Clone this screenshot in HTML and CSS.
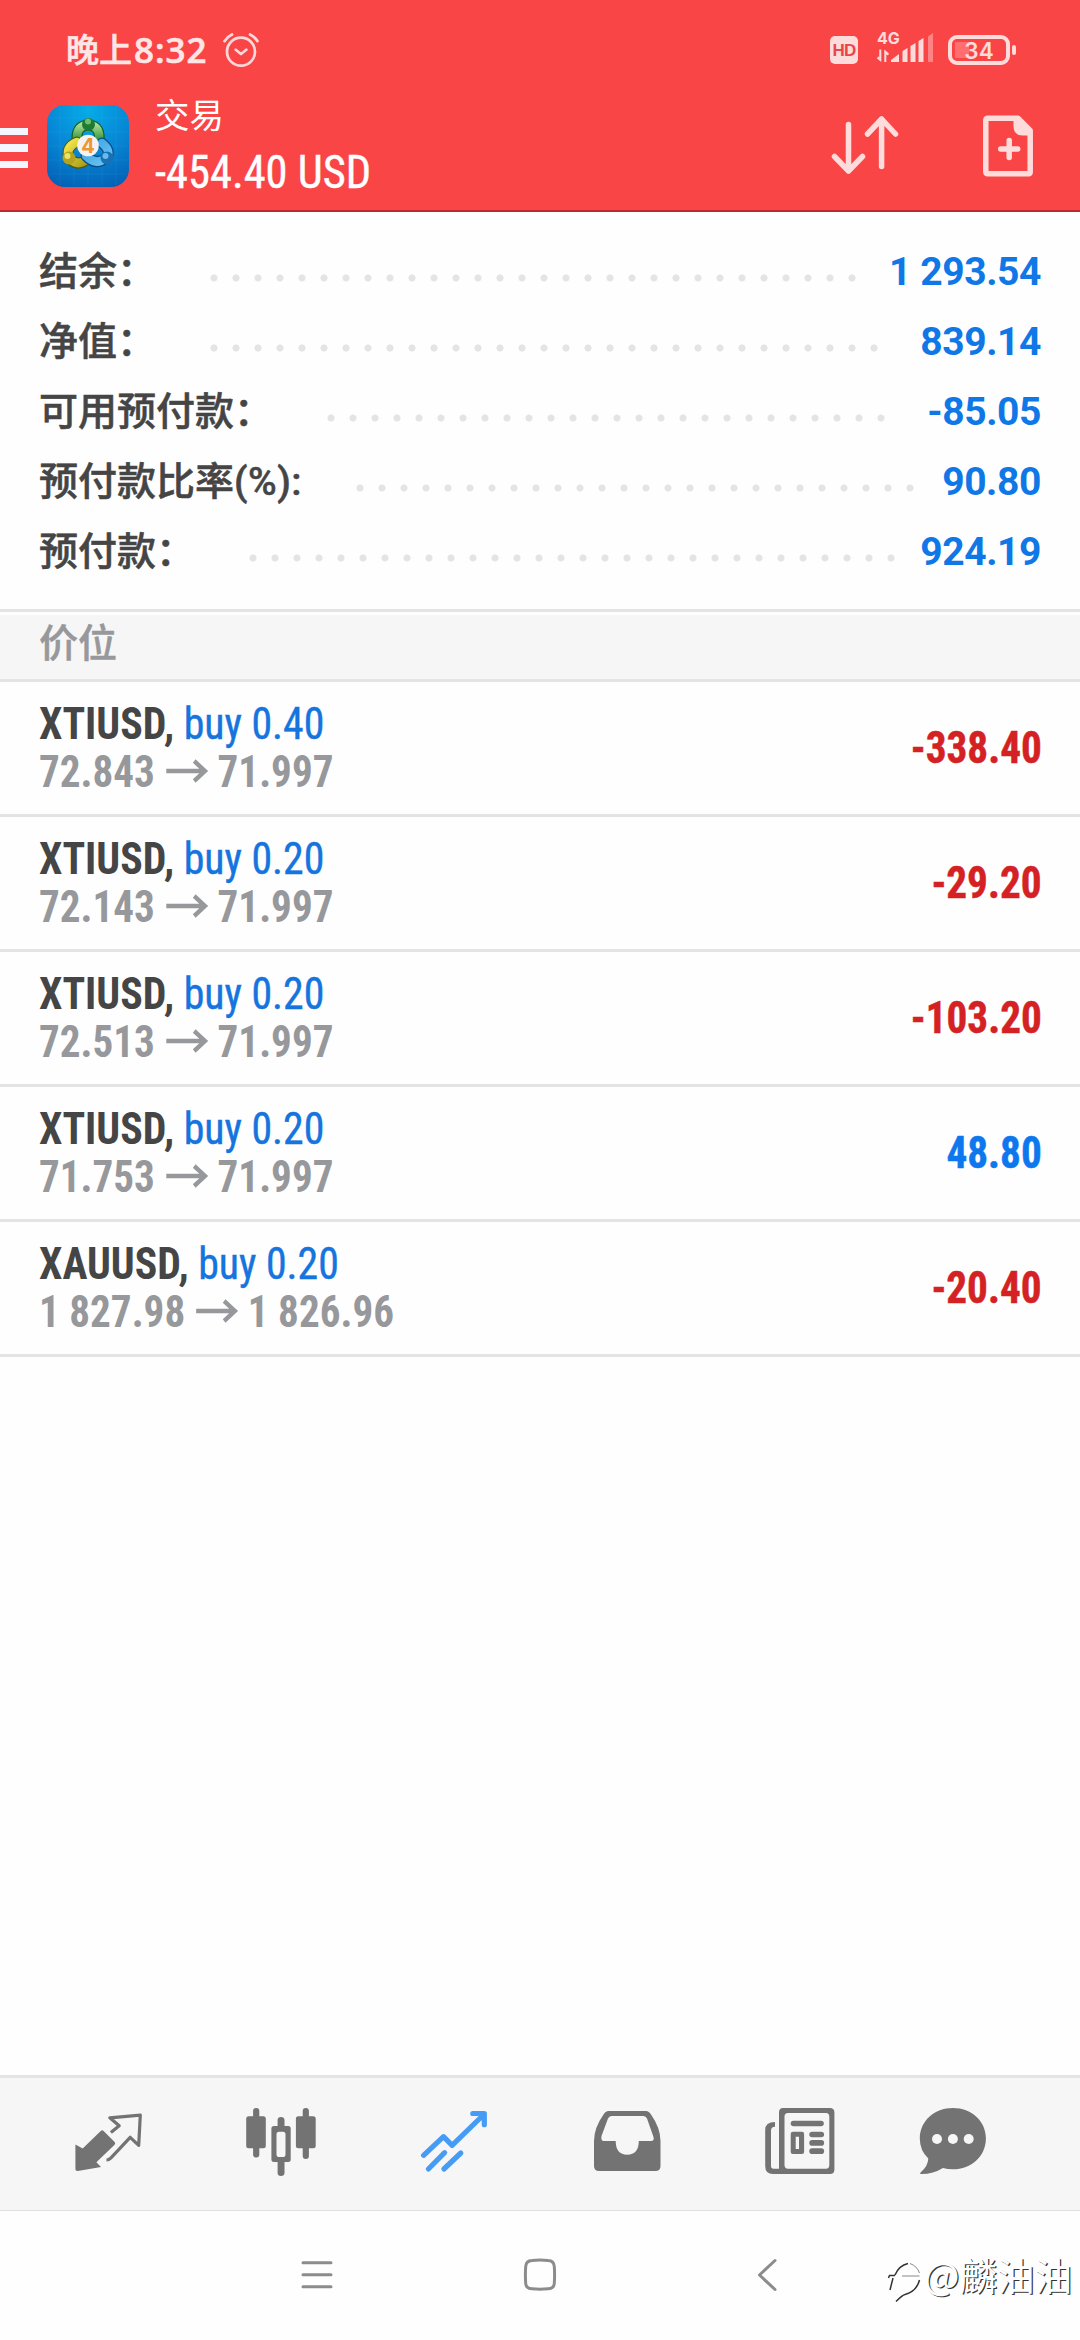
FILE: index.html
```html
<!DOCTYPE html>
<html lang="zh-CN">
<head>
<meta charset="utf-8">
<title>交易</title>
<link rel="stylesheet" href="styles.css">
</head>
<body>
<div class="screen">
  <header class="header">
    <div class="status">
      <span class="clock">晚上<span class="clock-digits">8:32</span></span>
      <svg class="alarm" width="38" height="38" viewBox="0 0 38 38">
        <circle cx="19" cy="20.700" r="14" />
        <path d="M13.700 18.700 19 23 24.300 18.700M2.500 10.200Q5.500 5.500 10 3.500M35.500 10.200Q32.500 5.500 28 3.500" />
      </svg>
      <span class="status-gap"></span>
      <span class="hd">HD</span>
      <div class="network">
        <svg width="50" height="36" viewBox="0 0 50 36">
          <text x="0" y="15" class="net-label">4G</text>
          <path d="M4.300 20.500V33L0 29.500 1 27.500 2.300 28V20.500ZM7.300 33V20.500L12 24.500 11 26.500 9.300 25.500V33Z" />
          <path d="M14 33v-2q4-3 8-6v8ZM25.500 33V22l5-3v14ZM33.500 33V17l5-3v19ZM41.500 33V12l5-3v24Z" />
        </svg>
        <svg width="6" height="36" viewBox="0 0 6 36" class="weak"><path d="M0 33V7.500L5 4v29Z" /></svg>
      </div>
      <div class="battery"><span class="battery-body">34</span><span class="battery-tip"></span></div>
    </div>
    <div class="toolbar">
      <div class="menu"><i></i><i></i><i></i></div>
      <svg class="logo" width="82" height="82" viewBox="0 0 82 82">
        <defs>
          <radialGradient id="sky" cx=".5" cy=".05" r="1"><stop offset="0" stop-color="#05ace8"/><stop offset=".55" stop-color="#0785d4"/><stop offset="1" stop-color="#0361b5"/></radialGradient>
          <linearGradient id="green" x2="0" y2="1"><stop stop-color="#a6dc8c"/><stop offset="1" stop-color="#238a35"/></linearGradient>
          <linearGradient id="gold" x2="1" y2="1"><stop stop-color="#f2e64a"/><stop offset="1" stop-color="#a99a18"/></linearGradient>
          <linearGradient id="blue" x2="1" y2="1"><stop stop-color="#3aa2e0"/><stop offset="1" stop-color="#69c3f4"/></linearGradient>
        </defs>
        <rect width="82" height="82" rx="18" fill="url(#sky)"/>
        <path d="M13 2v78M27 1v80M41 1v80M55 1v80M69 2v78M2 13h78M1 27h80M1 41h80M1 55h80M2 69h78" stroke="#69c9fa" stroke-opacity=".1"/>
        <g fill="none" stroke-linecap="round">
          <path d="M30 35Q29 20 42 20Q54 21 52 37" stroke="#14612d" stroke-width="11"/>
          <path d="M30 35Q29 20 42 20Q54 21 52 37" stroke="url(#green)" stroke-width="8.500"/>
          <path d="M22 54Q18 42 30 37M23 54Q31 62 41 54" stroke="#4d5a12" stroke-width="11"/>
          <path d="M22 54Q18 42 30 37M23 54Q31 62 41 54" stroke="url(#gold)" stroke-width="8.500"/>
          <path d="M55 38Q65 46 59 53Q49 61 39 51" stroke="#0a4c87" stroke-width="11"/>
          <path d="M55 38Q65 46 59 53Q49 61 39 51" stroke="url(#blue)" stroke-width="8.500"/>
        </g>
        <circle cx="41.500" cy="19.500" r="6.500" fill="#1e7b34"/><circle cx="41" cy="16.500" r="3" fill="#72bd69"/>
        <circle cx="22" cy="53" r="6.500" fill="#b3a31f"/><circle cx="20.500" cy="51" r="3" fill="#ece267"/>
        <circle cx="60" cy="53" r="6.500" fill="#1971b5"/><circle cx="58.500" cy="51" r="3" fill="#6db9ea"/>
        <circle cx="41" cy="40.500" r="10.800" fill="#f4f3f0"/>
        <text x="41" y="47.500" class="logo-digit">4</text>
      </svg>
      <div class="title">
        <span class="title-name">交易</span>
        <span class="title-sum">-454.40 USD</span>
      </div>
      <svg class="sort" width="72" height="72" viewBox="0 0 72 72">
        <path d="M20.500 14.500V61M6.500 46.500 20.500 61 34.500 46.500M53.600 56.500V9M39.500 24 53.600 9 67.500 24" />
      </svg>
      <svg class="order" width="56" height="66" viewBox="0 0 56 66">
        <path class="page" d="M8 5.300H38L50.200 17.500V59Q50.200 60.700 48.500 60.700H8Q5.800 60.700 5.800 58.500V7.500Q5.800 5.300 8 5.300Z" />
        <path class="fold" d="M33.500 5V14Q34 22 42.500 22.500H50L50 16 39 5Z" />
        <path class="page plus" d="M29.200 27.500V44.500M20.700 36H37.700" />
      </svg>
    </div>
  </header>

  <main class="content">
    <section class="summary">
      <div class="sum-row"><span class="label">结余：</span><span class="dots" style="--dots:30"></span><span class="value">1 293.54</span></div>
      <div class="sum-row"><span class="label">净值：</span><span class="dots" style="--dots:31"></span><span class="value">839.14</span></div>
      <div class="sum-row"><span class="label">可用预付款：</span><span class="dots" style="--dots:26"></span><span class="value">-85.05</span></div>
      <div class="sum-row"><span class="label">预付款比率<span class="percent">(%):</span></span><span class="dots" style="--dots:26"></span><span class="value">90.80</span></div>
      <div class="sum-row"><span class="label">预付款：</span><span class="dots" style="--dots:30"></span><span class="value">924.19</span></div>
    </section>
    <h2 class="section">价位</h2>
    <ul class="positions">
      <li class="position">
        <div class="info">
          <div class="line"><b>XTIUSD,</b><span class="side">buy 0.40</span></div>
          <div class="line prices">72.843<svg class="arrow" width="45" height="24" viewBox="0 0 45 24"><path d="M0 12H42M30 2 41.500 12 30 22"/></svg>71.997</div>
        </div>
        <span class="profit loss">-338.40</span>
      </li>
      <li class="position">
        <div class="info">
          <div class="line"><b>XTIUSD,</b><span class="side">buy 0.20</span></div>
          <div class="line prices">72.143<svg class="arrow" width="45" height="24" viewBox="0 0 45 24"><path d="M0 12H42M30 2 41.500 12 30 22"/></svg>71.997</div>
        </div>
        <span class="profit loss">-29.20</span>
      </li>
      <li class="position">
        <div class="info">
          <div class="line"><b>XTIUSD,</b><span class="side">buy 0.20</span></div>
          <div class="line prices">72.513<svg class="arrow" width="45" height="24" viewBox="0 0 45 24"><path d="M0 12H42M30 2 41.500 12 30 22"/></svg>71.997</div>
        </div>
        <span class="profit loss">-103.20</span>
      </li>
      <li class="position">
        <div class="info">
          <div class="line"><b>XTIUSD,</b><span class="side">buy 0.20</span></div>
          <div class="line prices">71.753<svg class="arrow" width="45" height="24" viewBox="0 0 45 24"><path d="M0 12H42M30 2 41.500 12 30 22"/></svg>71.997</div>
        </div>
        <span class="profit">48.80</span>
      </li>
      <li class="position">
        <div class="info">
          <div class="line"><b>XAUUSD,</b><span class="side">buy 0.20</span></div>
          <div class="line prices">1 827.98<svg class="arrow" width="45" height="24" viewBox="0 0 45 24"><path d="M0 12H42M30 2 41.500 12 30 22"/></svg>1 826.96</div>
        </div>
        <span class="profit loss">-20.40</span>
      </li>
    </ul>
  </main>

  <nav class="tabs">
    <svg viewBox="0 0 96 96">
      <path class="fill" d="M15.400 49.500 22.700 53.500 41 35.800Q42.300 34.700 43.600 36L54.600 47Q55.800 48.300 54.600 49.800L36.400 67.300 41 72 17.800 76Q15.400 76.200 15.400 74Z" />
      <path class="thin" d="M50.900 37.500 59.200 30.700 49.800 22.800 80.300 20.200 78.700 50.300 70.200 42.300 50.500 63.300Q49 65 46.500 65" />
    </svg>
    <svg viewBox="0 0 96 96">
      <g class="fill">
        <rect x="13.200" y="21.300" width="19.600" height="32" rx="2.500"/><rect x="20.100" y="13" width="6.200" height="49.500" rx="3"/>
        <path fill-rule="evenodd" d="M41 31H55.200Q57.700 31 57.700 33.500V64.500Q57.700 67 55.200 67H41Q38.400 67 38.400 64.500V33.500Q38.400 31 41 31ZM46 36.700Q43.500 36.700 43.500 39.500V59.200Q43.500 62 46 62H50Q52.500 62 52.500 59.200V39.500Q52.500 36.700 50 36.700Z"/>
        <path d="M44.600 32V25Q44.600 22 48 22T51.500 25V32ZM44.600 66V78Q44.600 81 48 81T51.500 78V66Z"/>
        <rect x="62.900" y="21.300" width="19.800" height="32" rx="2.500"/><rect x="69.700" y="13" width="6.200" height="51" rx="3"/>
      </g>
    </svg>
    <svg viewBox="0 0 96 96">
      <path class="active" d="M17.600 60.300 37.500 41.700 46.100 50.300 77.800 19.500M66.800 18.500H78.300V29.700M22.400 74 38.600 57.700M37.900 74 54.800 58" />
    </svg>
    <svg viewBox="0 0 96 96">
      <path class="fill" fill-rule="evenodd" d="M29.500 16H67Q70 16 72 19.500 81.500 33 81.500 46V71Q81.500 76 76.500 76H20Q15 76 15 71V46Q15 33 24.500 19.500 26.500 16 29.500 16ZM32.500 21Q30 21 29 23.500L22.500 41Q21.500 46 25 46H36.700Q36.700 59.700 48.200 59.700T59.800 46H72Q75.500 46 74.500 42L68 23.500Q67 21 64.500 21Z" />
    </svg>
    <svg viewBox="0 0 96 96">
      <g class="fill">
        <path fill-rule="evenodd" d="M31 13H78Q82.400 13 82.400 17.500V74.500Q82.400 79 78 79H21Q13.200 79 13.200 71V35Q13.200 27 23 27V31.800Q19 31.800 19 36V71Q19 73.700 21.500 73.700H27V17.500Q27 13 31 13ZM36 18Q32.500 18 32.500 21.500V70Q32.500 73.700 36 73.700H74Q77.300 73.700 77.300 70V21.500Q77.300 18 74 18Z"/>
        <rect x="38.700" y="25.700" width="33.100" height="5.600" rx="2.800"/>
        <path fill-rule="evenodd" d="M41 36.700H50Q52.100 36.700 52.100 39V57Q52.100 59 50 59H41Q38.700 59 38.700 57V39Q38.700 36.700 41 36.700ZM43.700 41.700V54H47V41.700Z"/>
        <rect x="57.300" y="36.700" width="14.800" height="5.600" rx="2.800"/><rect x="57.300" y="45" width="14.800" height="5.700" rx="2.800"/><rect x="57.300" y="53.300" width="14.800" height="5.700" rx="2.800"/>
      </g>
    </svg>
    <svg viewBox="0 0 96 96">
      <path class="fill" d="M47.900 13C66.500 13 80.900 26 80.900 43.500S66.500 74.300 47.900 74.300Q42.500 74.300 37.900 73 28.500 79 16.500 79 14 79 16 77 23 71 23.300 63.500 14.800 55.500 14.800 43.500C14.800 26 29.300 13 47.900 13Z" />
      <g class="holes"><circle cx="32" cy="44" r="5"/><circle cx="47.900" cy="44" r="5"/><circle cx="63.700" cy="44" r="5"/></g>
    </svg>
  </nav>

  <footer class="system">
    <svg width="36" height="36" viewBox="0 0 36 36"><path d="M4 5.700H32M4 17.700H32M4 29.700H32"/></svg>
    <svg width="36" height="36" viewBox="0 0 36 36"><path d="M10 3.500Q18 2.500 26 3.500 32 3.800 32.300 9.500 32.900 18 32.300 26.500 32 31.500 26 31.800 18 32.700 10 31.800 4 31.500 3.700 26.500 3.100 18 3.700 9.500 4 3.800 10 3.500Z"/></svg>
    <svg width="36" height="36" viewBox="0 0 36 36"><path d="M26 3.500 10.500 18 26 32.500"/></svg>
    <div class="watermark">
      <svg width="40" height="54" viewBox="0 0 40 54">
        <path class="ink" d="M11 23Q15 13.500 24 11.500M4.500 26 5.500 23.500H11M9 26 6 38M35.500 28Q33 39 21 42.500 18.500 43 12 49.500"/>
        <path class="shine" d="M26 11.500Q33 14 35.500 21M18 24H35.500"/>
      </svg>
      <span>@麟油油</span>
    </div>
  </footer>
</div>
</body>
</html>
```
FILE: styles.css
```css
* { box-sizing: border-box; }

body {
  margin: 0;
  background: #fff;
  font-family: Roboto, "Noto Sans CJK SC", sans-serif;
}

.screen {
  display: flex;
  flex-direction: column;
  width: 1080px;
  height: 2340px;
  overflow: hidden;
  background: #fefefe;
}

svg { display: block; flex: none; }

/* Header */
.header {
  height: 212px;
  background: #fa4547;
  border-bottom: 2px solid #bb2a2e;
  color: #ffdcdc;
}

.status {
  display: flex;
  align-items: center;
  height: 90px;
  padding: 9px 64px 0 66px;
}

.clock {
  display: flex;
  width: 156px;
  font: 500 33px/38px "Noto Sans CJK SC", sans-serif;
  color: #ffe6e6;
  -webkit-text-stroke: 0.600px;
}

.clock-digits {
  padding: 1px 0 0 2px;
  font: 600 35px/40px "Open Sans", sans-serif;
  letter-spacing: 1px;
}

.alarm { fill: none; stroke: #ffd9d9; stroke-width: 2.700; stroke-linecap: round; stroke-linejoin: round; }
.status-gap { flex: 1; }

.hd {
  width: 28px;
  height: 28px;
  margin-right: 18px;
  border-radius: 5px;
  background: #ffdcdc;
  color: #e8474a;
  font: 700 17px/29px "Liberation Sans", sans-serif;
  letter-spacing: -0.800px;
  text-align: center;
}

.network { display: flex; width: 72px; fill: #ffdcdc; }
.network svg { overflow: visible; transform: translate(1px, -3px); }
.network .weak { fill: #ff8384; margin-left: 1px; }
.net-label { font: 700 16px Inter, sans-serif; }

.battery { display: flex; align-items: center; gap: 2px; }

.battery-body {
  width: 62px;
  height: 30px;
  border: 4px solid #ffdcdc;
  border-radius: 9px;
  background: linear-gradient(#ff6f70, #ff6f70) 3px 3px / 14px 16px no-repeat;
  font: 600 22.500px/23px Inter, sans-serif;
  text-align: center;
}

.battery-tip { width: 4px; height: 10px; border-radius: 2px; background: #ffdcdc; }

.toolbar { display: flex; align-items: center; height: 112px; }

.menu { display: flex; flex-direction: column; gap: 9px; width: 47px; padding-top: 4px; }
.menu i { width: 28px; height: 7.500px; background: #f4f5ff; }

.logo-digit { font: 700 20px Inter, sans-serif; fill: #ee9535; text-anchor: middle; }

.title {
  display: flex;
  flex-direction: column;
  flex: 1;
  margin-left: 26px;
  color: #fff;
}

.title-name { font-size: 34.500px; line-height: 52px; }

.title-sum {
  font: 400 46px/60px "Roboto Condensed", sans-serif;
  -webkit-text-stroke: 0.400px;
  transform: scaleX(0.967);
  transform-origin: left;
}

.sort { margin-right: 80px; fill: none; stroke: #ffdcdc; stroke-width: 5.500; stroke-linecap: round; stroke-linejoin: round; }
.order { margin-right: 44px; }
.page { fill: none; stroke: #ffdcdc; stroke-width: 5.500; stroke-linejoin: round; }
.plus { stroke-linecap: round; }
.fold { fill: #ffdcdc; }

/* Account summary */
.content { flex: 1; }

.summary { padding: 25px 39px 22px; border-bottom: 3px solid #e4e4e4; }

.sum-row {
  display: flex;
  height: 70px;
  font-size: 39px;
  line-height: 70px;
  font-weight: 500;
}

.label { color: #454545; white-space: nowrap; -webkit-text-stroke: 0.500px; }
.percent { letter-spacing: 0.500px; }

.dots {
  width: calc(var(--dots) * 22px);
  height: 8px;
  margin: 37px 0 0 46.500px;
  background: radial-gradient(circle at 50% 50%, #e4e4e4 3.200px, transparent 3.900px) 0 0 / 22px 8px;
}

.value { margin-left: auto; font-weight: 700; letter-spacing: -0.400px; color: #0f78e6; }

.section {
  height: 67px;
  margin: 3px 0 0;
  padding: 0 39px;
  border-bottom: 3px solid #e4e4e4;
  background: #f6f6f6;
  font-size: 39px;
  font-weight: 500;
  line-height: 59px;
  color: #97989b;
  -webkit-text-stroke: 0.500px;
}

/* Open positions */
.positions { margin: 0; padding: 0; list-style: none; }

.position {
  display: flex;
  justify-content: space-between;
  height: 135px;
  padding: 18px 38px 0 39px;
  border-bottom: 3px solid #e4e4e4;
  font: 400 44px/48px "Roboto Condensed", sans-serif;
}

/* The face is set slightly narrower than its regular condensed width */
.line { display: flex; color: #454545; transform: scaleX(0.95); transform-origin: left; }
.side { margin-left: 10px; color: #1574dd; -webkit-text-stroke: 0.400px; }
.prices { font-weight: 700; color: #97989b; transform: scaleX(0.935); }
.arrow { margin: 11px 10px 0 12px; fill: none; stroke: #97989b; stroke-width: 4.500; }

.profit {
  padding-top: 24px;
  font-weight: 700;
  color: #0d78ee;
  -webkit-text-stroke: 0.500px;
  transform: scaleX(0.937);
  transform-origin: right;
}

.loss { color: #d42224; }

/* Bottom tabs */
.tabs {
  display: flex;
  gap: 77px;
  height: 136px;
  padding: 17px 0 0 60px;
  border-top: 3px solid #e4e4e4;
  border-bottom: 1px solid #e0e0e0;
  background: #f6f6f6;
}

.tabs svg { width: 96px; height: 96px; }
.tabs svg:last-child { margin-left: -20px; }
.fill { fill: #737373; }
.thin { fill: none; stroke: #737373; stroke-width: 3.200; stroke-linejoin: round; }
.holes { fill: #f6f6f6; }
.active { fill: none; stroke: #469cf4; stroke-width: 5.200; stroke-linecap: round; stroke-linejoin: round; }

/* System navigation */
.system {
  position: relative;
  display: flex;
  gap: 187px;
  height: 129px;
  padding: 46px 0 0 299px;
}

.system > svg { fill: none; stroke: #8c8c8c; stroke-width: 3; stroke-linecap: round; stroke-linejoin: round; }
.system > svg:nth-child(3) { margin-left: 4px; }

.watermark {
  position: absolute;
  right: 8px;
  top: 41px;
  display: flex;
  font: 400 37.500px/44px "Noto Sans CJK SC", sans-serif;
  color: #fff;
  text-shadow: 1.300px 1.300px 0 #333;
}

.ink { fill: none; stroke: #333; stroke-width: 1.500; }
.shine { fill: none; stroke: #888; stroke-width: 1; }
```
